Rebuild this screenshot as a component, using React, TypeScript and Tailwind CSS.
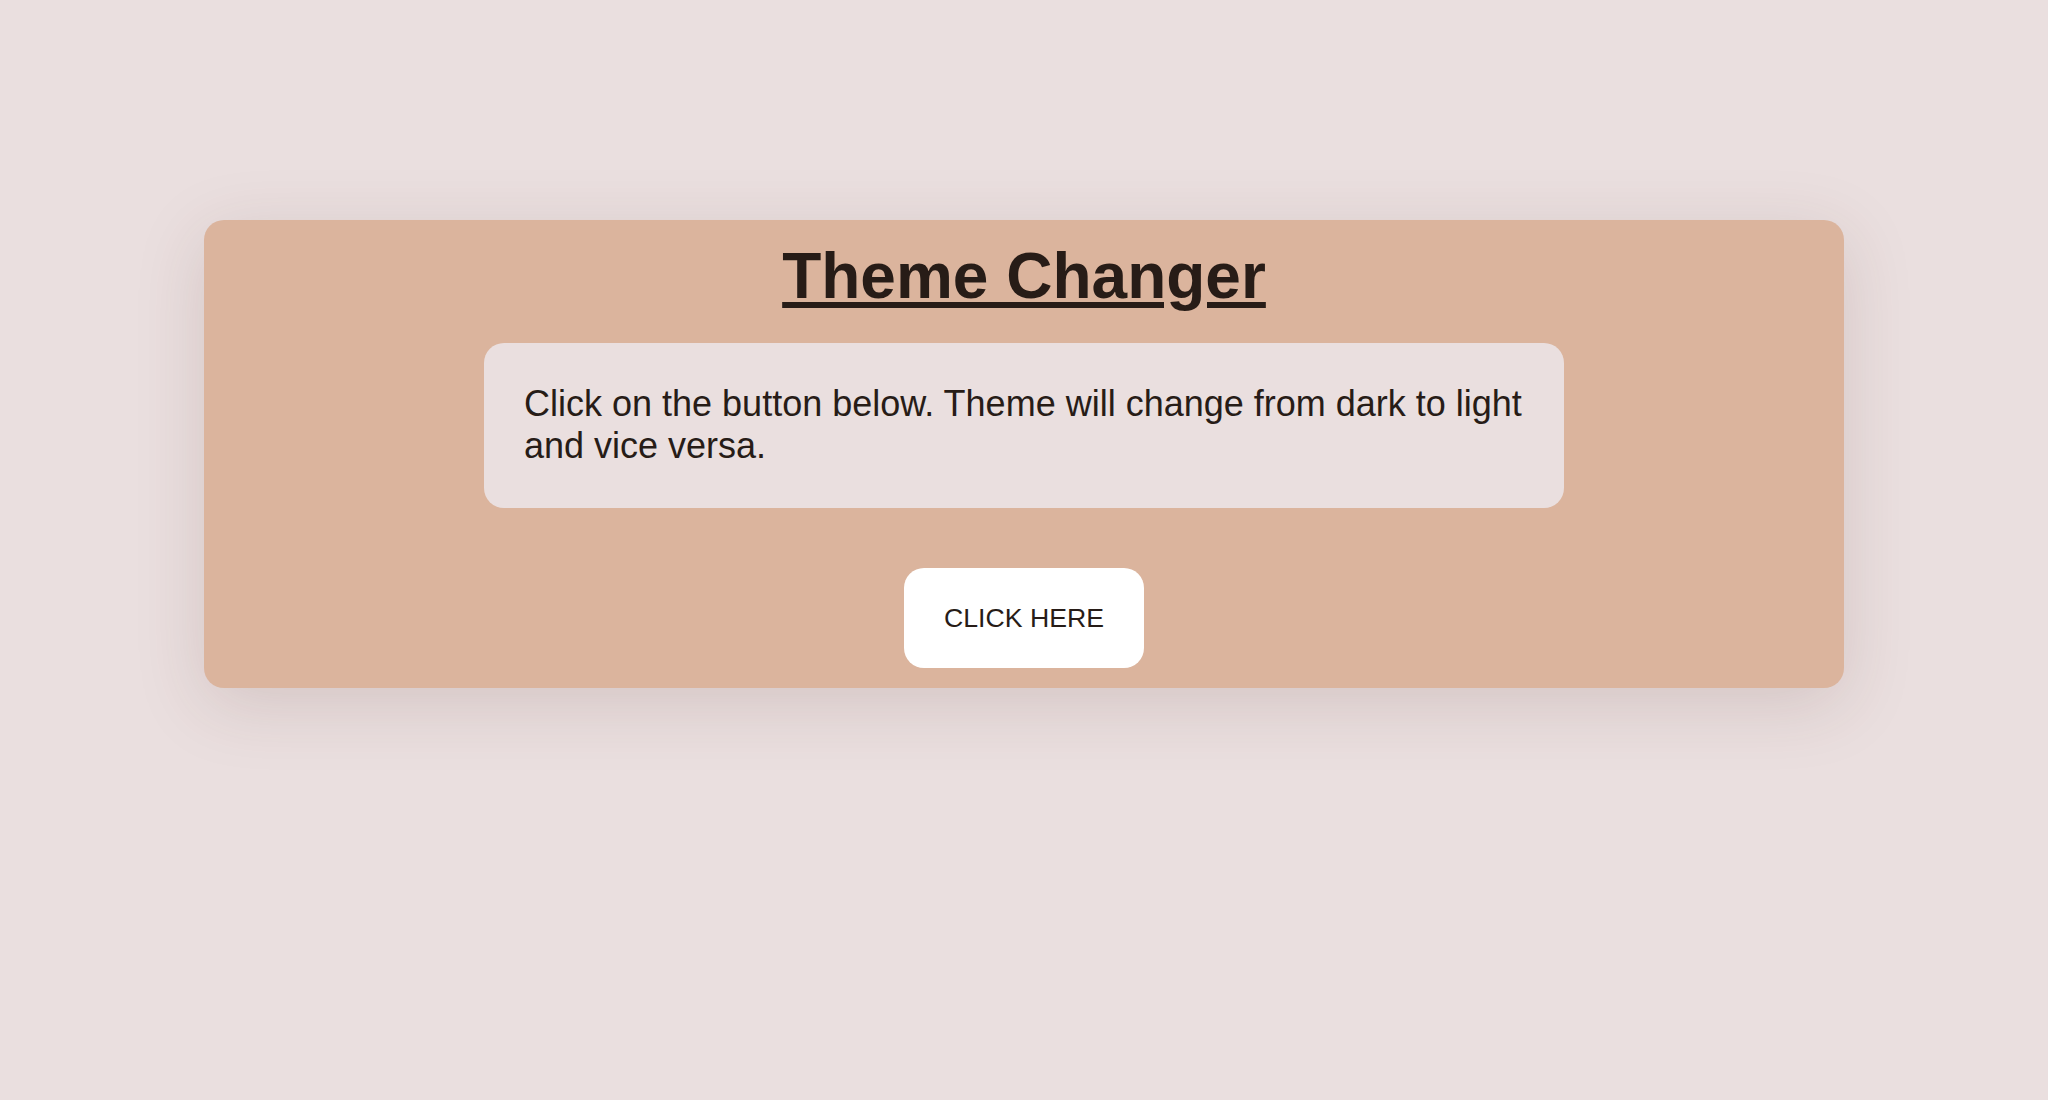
import React, { useState } from 'react';

const App = () => {
  const [dark, setDark] = useState(false);

  return (
    <div
      className="min-h-screen w-full bg-[#eadfdf] pt-[220px] text-[#271c17]"
      style={{ fontFamily: '"Liberation Sans", Arial, sans-serif' }}
    >
      {/* card */}
      <div className="mx-auto flex w-[1640px] flex-col items-center rounded-[20px] bg-[#dbb49d] px-5 pb-5 pt-[19px] shadow-[0_16px_70px_rgba(90,50,40,0.15)]">
        <h1 className="text-[64px] font-bold leading-[74px] underline decoration-[6px] underline-offset-[4px]">
          Theme Changer
        </h1>

        <div className="mt-[30px] w-[1080px] rounded-[20px] bg-[#eadfdf] px-10 pb-[42px] pt-10">
          <p className="text-[36px] leading-[41.5px]">
            Click on the button below. Theme will change from dark to light and vice versa.
          </p>
        </div>

        <button
          onClick={() => setDark(!dark)}
          className="mt-[60px] h-[100px] w-[240px] rounded-[20px] bg-white text-[26.67px] text-[#271c17]"
        >
          CLICK HERE
        </button>
      </div>
    </div>
  );
};

export default App;
